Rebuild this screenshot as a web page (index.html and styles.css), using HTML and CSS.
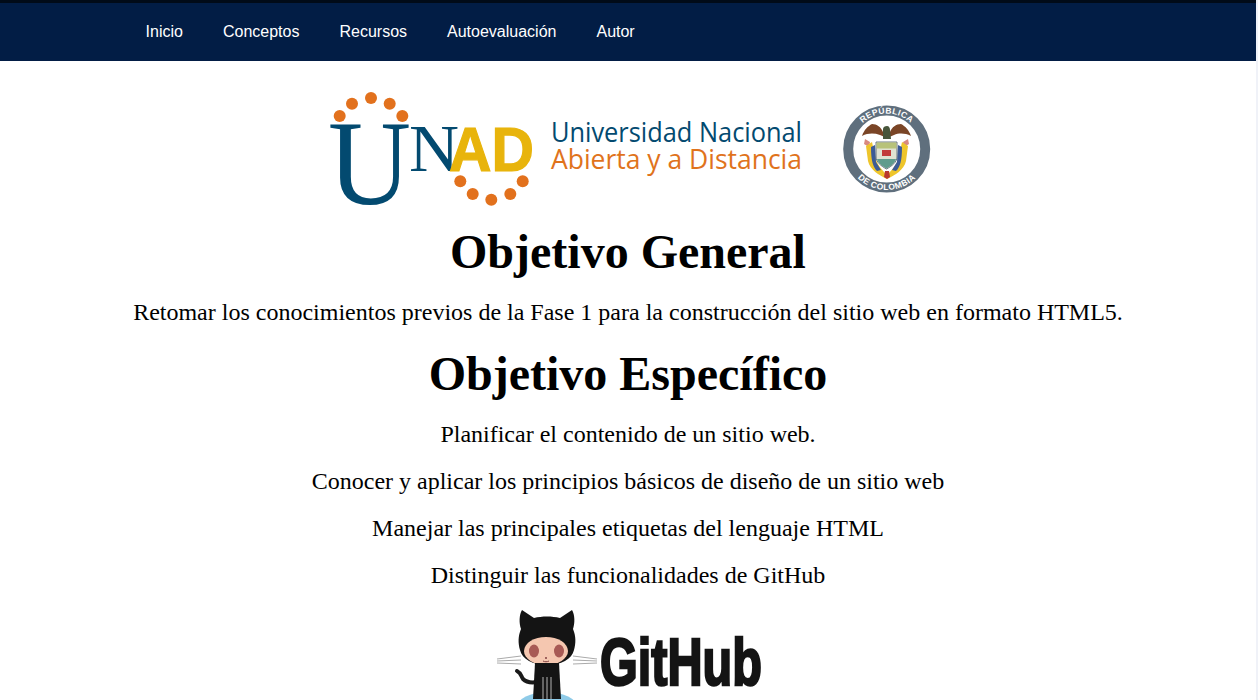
FILE: index.html
```html
<!DOCTYPE html>
<html lang="es">
<head>
    <meta charset="UTF-8">
    <title>Objetivos</title>
    <link rel="stylesheet" href="styles.css">
</head>
<body>

<div class="navbar">
    <ul class="menu">
        <li><a href="#">Inicio</a></li>
        <li><a href="#">Conceptos</a></li>
        <li><a href="#">Recursos</a></li>
        <li><a href="#">Autoevaluación</a></li>
        <li><a href="#">Autor</a></li>
    </ul>
</div>

<div class="content">
    <svg class="logo" width="608" height="134" viewBox="324 90 608 134">
        <!-- puntos naranja -->
        <g fill="#e2711d">
            <circle cx="339.7" cy="116" r="6"/>
            <circle cx="352" cy="103.7" r="6"/>
            <circle cx="371" cy="98" r="6"/>
            <circle cx="389.7" cy="103.7" r="6"/>
            <circle cx="402.3" cy="116" r="6"/>
            <circle cx="460.3" cy="181.3" r="6"/>
            <circle cx="472.7" cy="194" r="6"/>
            <circle cx="491.3" cy="199.7" r="6"/>
            <circle cx="510.3" cy="194" r="6"/>
            <circle cx="522.7" cy="181.3" r="6"/>
        </g>
        <text class="logo-serif" x="328" y="204" font-size="120" textLength="83" lengthAdjust="spacingAndGlyphs">U</text>
        <text class="logo-serif" x="409" y="170.7" font-size="68" textLength="50" lengthAdjust="spacingAndGlyphs">N</text>
        <text class="logo-ad" x="449" y="170.7" font-size="63" textLength="85" lengthAdjust="spacingAndGlyphs">AD</text>
        <text class="logo-name" x="551" y="142" font-size="28" textLength="251" lengthAdjust="spacingAndGlyphs" fill="#034a70">Universidad Nacional</text>
        <text class="logo-name" x="551" y="169" font-size="28" textLength="251" lengthAdjust="spacingAndGlyphs" fill="#e0731c">Abierta y a Distancia</text>

        <!-- escudo de Colombia -->
        <circle cx="886.7" cy="149" r="38.5" fill="none" stroke="#5f6f7d" stroke-width="10"/>
        <defs>
            <path id="arcTop" d="M851.2 149a35.5 35.5 0 0 1 71 0"/>
            <path id="arcBottom" d="M845.7 149a41 41 0 0 0 82 0"/>
        </defs>
        <text class="seal-text"><textPath href="#arcTop" startOffset="50%">REPÚBLICA</textPath></text>
        <text class="seal-text"><textPath href="#arcBottom" startOffset="50%">DE COLOMBIA</textPath></text>
        <!-- aguila -->
        <path d="M862 136c2-6 6-10 10-12 5 0 9 3 11 8h7c2-5 6-8 11-8 4 2 8 6 10 12-6-3-12-3-17-1l-7 3-7-3c-6-2-12-2-18 1z" fill="#7a4526"/>
        <path d="M883 129c0-2 2-3 4-3s3 2 3 4l1 9h-8z" fill="#47553a"/>
        <!-- cintas -->
        <path d="M865 139l5 3-1 5-5-3zM908 139l-5 3 1 5 5-3z" fill="#d98a80"/>
        <!-- marco y banderas -->
        <path d="M866 146l6-4 3 14c1 7 6 13 12 19 6-6 11-12 12-19l3-14 6 4-2 15c-2 9-11 14-19 18-8-4-17-9-19-18z" fill="#eec52b"/>
        <path d="M871 147l4-2 1 17 5 8-4 1c-4-4-6-10-6-24zM902 147l-4-2-1 17-5 8 4 1c4-4 6-10 6-24z" fill="#3d5b96"/>
        <!-- blason -->
        <path d="M876 142h21v15c0 5-5 9-10.500 12-5.500-3-10.500-7-10.500-12z" fill="#e0e2d2" stroke="#47596b" stroke-width=".8"/>
        <rect x="876.500" y="142.500" width="20" height="6" fill="#b7c27a"/>
        <rect x="882" y="150" width="9" height="6" fill="#c23a3a"/>
        <path d="M877 159h19c-1 4-5 7-9.500 9.500-4.500-2.500-8.500-5.500-9.500-9.500z" fill="#5f9c8e"/>
        <path d="M885 171h4l1 6-3 2-3-2z" fill="#b8382e"/>
    </svg>

    <h1>Objetivo General</h1>
    <p>Retomar los conocimientos previos de la Fase 1 para la construcción del sitio web en formato HTML5.</p>

    <h1>Objetivo Específico</h1>
    <p>Planificar el contenido de un sitio web.</p>
    <p>Conocer y aplicar los principios básicos de diseño de un sitio web</p>
    <p>Manejar las principales etiquetas del lenguaje HTML</p>
    <p>Distinguir las funcionalidades de GitHub</p>

    <svg class="github" width="268" height="110" viewBox="494 610 268 110">
        <ellipse cx="547" cy="708" rx="30" ry="15" fill="#8fcbe8"/>
        <!-- bigotes -->
        <path d="M497 660l24-3M497 662l24-1M497 664l24 1M597 660l-24-3M597 662l-24-1M597 664l-24 1" stroke="#aaa" fill="none"/>
        <!-- cola -->
        <path d="M537 683c-6 1-11 0-14-3-2-3-2-6-6-8" stroke="#1a1a1a" stroke-width="4" fill="none" stroke-linecap="round"/>
        <!-- cabeza -->
        <path d="M522 611l12 8c8-2 18-2 26 0l12-8c3 5 3 13 1 19 3 7 3 14 1 21-2 9-13 15-27 15s-25-6-27-15c-2-7-2-14 1-21-2-6-2-14 1-19z" fill="#141414"/>
        <ellipse cx="546" cy="652" rx="22" ry="14" fill="#f5c7b0"/>
        <ellipse cx="534" cy="652" rx="5" ry="6.500" fill="#a85a55"/>
        <ellipse cx="559" cy="652" rx="5" ry="6.500" fill="#a85a55"/>
        <circle cx="546" cy="659" r="1" fill="#804040"/>
        <path d="M543 662c2 1 4 1 6 0" stroke="#804040" fill="none"/>
        <!-- cuerpo -->
        <path d="M535 664h24l2 36h-28z" fill="#141414"/>
        <path d="M543 678v22M547 678v22M551 678v22" stroke="#999" stroke-width="1.200"/>
        <text class="github-word" x="600" y="686" font-size="66" textLength="162" lengthAdjust="spacingAndGlyphs">GitHub</text>
    </svg>
</div>

</body>
</html>
```

FILE: styles.css
```css
html {
    background-color: #f0f2f8;
    height: 700px;
    overflow: hidden;
}

body {
    margin: 0 2px 0 0;
    height: 700px;
    overflow: hidden;
    background-color: white;
    font-family: "Liberation Serif", serif;
    color: black;
}

/* Menu */
.navbar {
    background-color: #021d45;
    border-top: 3px solid #010b18;
    height: 58px;
}

.menu {
    display: flex;
    list-style: none;
    margin: 0;
    padding: 0 0 0 125.6px;
}

.menu a {
    display: block;
    padding: 0 20px;
    line-height: 58px;
    color: white;
    text-decoration: none;
    font-family: "Liberation Sans", sans-serif;
    font-size: 16px;
}

/* Contenido */
.content {
    text-align: center;
}

.logo {
    display: block;
    margin: 29px auto 0;
}

.logo-serif {
    font-family: "Liberation Serif", serif;
    fill: #034a70;
}

.logo-ad {
    font-family: "Liberation Sans", sans-serif;
    font-weight: bold;
    fill: #e8b40c;
    stroke: #e8b40c;
    stroke-width: 1.2;
}

.logo-name {
    font-family: "Open Sans", sans-serif;
}

.seal-text {
    font-family: "Liberation Sans", sans-serif;
    font-size: 8.5px;
    font-weight: bold;
    letter-spacing: 0.4px;
    fill: white;
    text-anchor: middle;
}

h1 {
    font-size: 48px;
    font-weight: bold;
    margin: 0;
}

p {
    font-size: 24px;
    margin: 20px 0;
}

.github {
    display: block;
    margin: 0 auto;
    filter: blur(0.5px);
}

.github-word {
    font-family: "Liberation Sans", sans-serif;
    font-weight: bold;
    fill: #141414;
    stroke: #141414;
    stroke-width: 2.5;
}
```
